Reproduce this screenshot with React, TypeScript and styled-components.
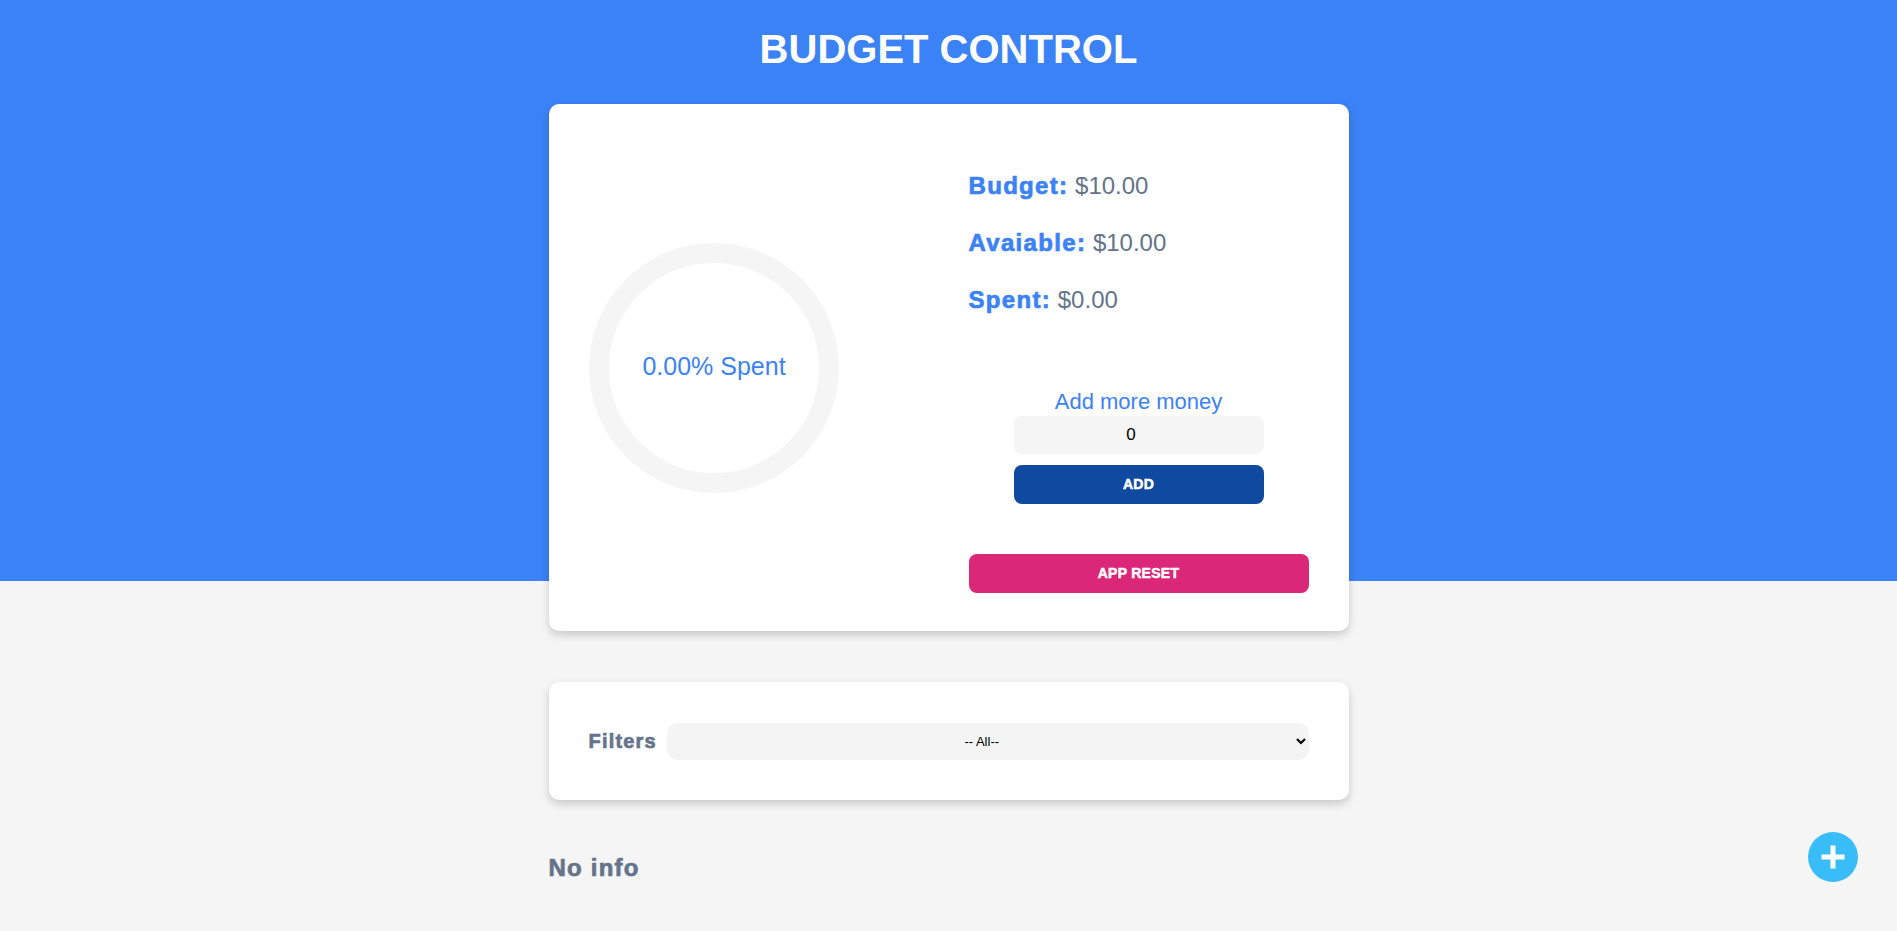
import React, { useState } from 'react'
import styled, { createGlobalStyle } from 'styled-components'

const GlobalStyle = createGlobalStyle`
  html, body {
    margin: 0;
    padding: 0;
    background: #f5f5f5;
    font-family: 'Liberation Sans', Arial, sans-serif;
  }
  * {
    box-sizing: border-box;
  }
`

const Header = styled.header`
  background: #3b82f6;
  display: flex;
  flex-direction: column;
  align-items: center;
`

const Title = styled.h1`
  margin: 0;
  padding: 27px 0 32px;
  color: #fff;
  font-size: 40px;
  font-weight: 700;
  line-height: normal;
  text-align: center;
`

const Card = styled.div<{ $overlap?: boolean }>`
  width: 800px;
  background: #fff;
  border-radius: 10px;
  box-shadow: 0 4px 8px rgba(0, 0, 0, 0.18);
  margin-bottom: ${p => (p.$overlap ? '-50px' : '0')};
`

const BudgetGrid = styled(Card)`
  display: grid;
  grid-template-columns: 1fr 1fr;
  gap: 40px;
  align-items: center;
  padding: 40px 40px 38px;
`

const ChartBox = styled.div`
  width: 250px;
  height: 250px;
`

const Heavy = styled.span`
  font-weight: 700;
  letter-spacing: 0.055em;
  -webkit-text-stroke: 0.7px currentColor;
`

const Summary = styled.div`
  display: flex;
  flex-direction: column;
`

const Stats = styled.div`
  display: flex;
  flex-direction: column;
  gap: 29.5px;
  margin-top: 28px;
`

const StatLine = styled.p`
  margin: 0;
  font-size: 24px;
  line-height: 1.15;
  color: #64748b;
`

const StatLabel = styled(Heavy)`
  color: #3b82f6;
`

const AddForm = styled.form`
  width: 250px;
  margin: 75px auto 0;
  display: flex;
  flex-direction: column;
`

const FormLabel = styled.label`
  color: #3b82f6;
  font-size: 22px;
  line-height: 26px;
  text-align: center;
  margin-bottom: 1px;
`

const AmountInput = styled.input`
  height: 38px;
  border: none;
  border-radius: 8px;
  background: #f5f5f5;
  text-align: center;
  font-family: 'Liberation Sans', Arial, sans-serif;
  font-size: 17px;
  color: #000;
  outline: none;
`

const Button = styled.button<{ $color: string }>`
  height: 39px;
  width: 100%;
  border: none;
  border-radius: 8px;
  background: ${p => p.$color};
  color: #fff;
  font-family: 'Liberation Sans', Arial, sans-serif;
  font-size: 14px;
  font-weight: 700;
  letter-spacing: 0.02em;
  -webkit-text-stroke: 0.5px #fff;
  text-transform: uppercase;
  cursor: pointer;
`

const AddButton = styled(Button)`
  margin-top: 11px;
`

const ResetButton = styled(Button)`
  margin-top: 50px;
`

const Main = styled.main`
  width: 800px;
  margin: 0 auto;
  padding-top: 101px;
`

const FilterCard = styled(Card)`
  display: flex;
  align-items: center;
  gap: 10px;
  padding: 41px 40px 40px;
`

const FilterLabel = styled(Heavy).attrs({ as: 'label' })`
  color: #64748b;
  font-size: 20px;
  letter-spacing: 0.06em;
`

const FilterSelect = styled.select`
  flex: 1;
  height: 37px;
  border: none;
  border-radius: 10px;
  background: #f4f4f4;
  text-align: center;
  font-family: 'Liberation Sans', Arial, sans-serif;
  font-size: 13px;
  color: #000;
  padding: 0 6px;
  outline: none;
`

const EmptyText = styled.h2`
  margin: 54px 0 0;
  font-size: 24px;
  line-height: normal;
  font-weight: 700;
  letter-spacing: 0.05em;
  -webkit-text-stroke: 0.7px #64748b;
  color: #64748b;
`

const FloatingButton = styled.button`
  position: fixed;
  right: 39px;
  bottom: 49px;
  width: 50px;
  height: 50px;
  border: none;
  border-radius: 50%;
  background: #38bdf8;
  padding: 0;
  display: flex;
  align-items: center;
  justify-content: center;
  cursor: pointer;
`

function ProgressRing({ percent }: { percent: number }) {
  const r = 46
  const len = 2 * Math.PI * r
  return (
    <svg viewBox="0 0 100 100" width="250" height="250">
      <circle cx="50" cy="50" r={r} fill="none" stroke="#f5f5f5" strokeWidth="8" />
      {percent > 0 && (
        <circle
          cx="50"
          cy="50"
          r={r}
          fill="none"
          stroke="#3b82f6"
          strokeWidth="8"
          strokeDasharray={len}
          strokeDashoffset={len * (1 - percent / 100)}
          transform="rotate(-90 50 50)"
        />
      )}
      <text
        x="50"
        y="50"
        textAnchor="middle"
        dominantBaseline="middle"
        fill="#3b82f6"
        fontSize="10"
        fontFamily="'Liberation Sans', Arial, sans-serif"
      >
        {percent.toFixed(2)}% Spent
      </text>
    </svg>
  )
}

const money = (n: number) => `$${n.toFixed(2)}`

export default function App() {
  const [budget] = useState(10)
  const [spent] = useState(0)
  const [extra, setExtra] = useState(0)
  const percent = budget > 0 ? (spent / budget) * 100 : 0

  return (
    <>
      <GlobalStyle />
      <Header>
        <Title>BUDGET CONTROL</Title>
        <BudgetGrid $overlap>
          <ChartBox>
            <ProgressRing percent={percent} />
          </ChartBox>
          <Summary>
            <Stats>
              <StatLine>
                <StatLabel>Budget:</StatLabel> {money(budget)}
              </StatLine>
              <StatLine>
                <StatLabel>Avaiable:</StatLabel> {money(budget - spent)}
              </StatLine>
              <StatLine>
                <StatLabel>Spent:</StatLabel> {money(spent)}
              </StatLine>
            </Stats>
            <AddForm onSubmit={e => e.preventDefault()}>
              <FormLabel htmlFor="extra">Add more money</FormLabel>
              <AmountInput
                id="extra"
                type="number"
                value={extra}
                onChange={e => setExtra(Number(e.target.value))}
              />
              <AddButton type="submit" $color="#1049a0">Add</AddButton>
            </AddForm>
            <ResetButton type="button" $color="#db2777">App reset</ResetButton>
          </Summary>
        </BudgetGrid>
      </Header>

      <Main>
        <FilterCard>
          <FilterLabel htmlFor="filter">Filters</FilterLabel>
          <FilterSelect id="filter" defaultValue="">
            <option value="">-- All--</option>
            <option value="food">Food</option>
            <option value="home">Home</option>
            <option value="leisure">Leisure</option>
          </FilterSelect>
        </FilterCard>
        <EmptyText>No info</EmptyText>
      </Main>

      <FloatingButton aria-label="New expense">
        <svg width="24" height="24" viewBox="0 0 24 24">
          <rect x="0.5" y="9.5" width="23" height="5" fill="#fff" />
          <rect x="9.5" y="0.5" width="5" height="23" fill="#fff" />
        </svg>
      </FloatingButton>
    </>
  )
}
